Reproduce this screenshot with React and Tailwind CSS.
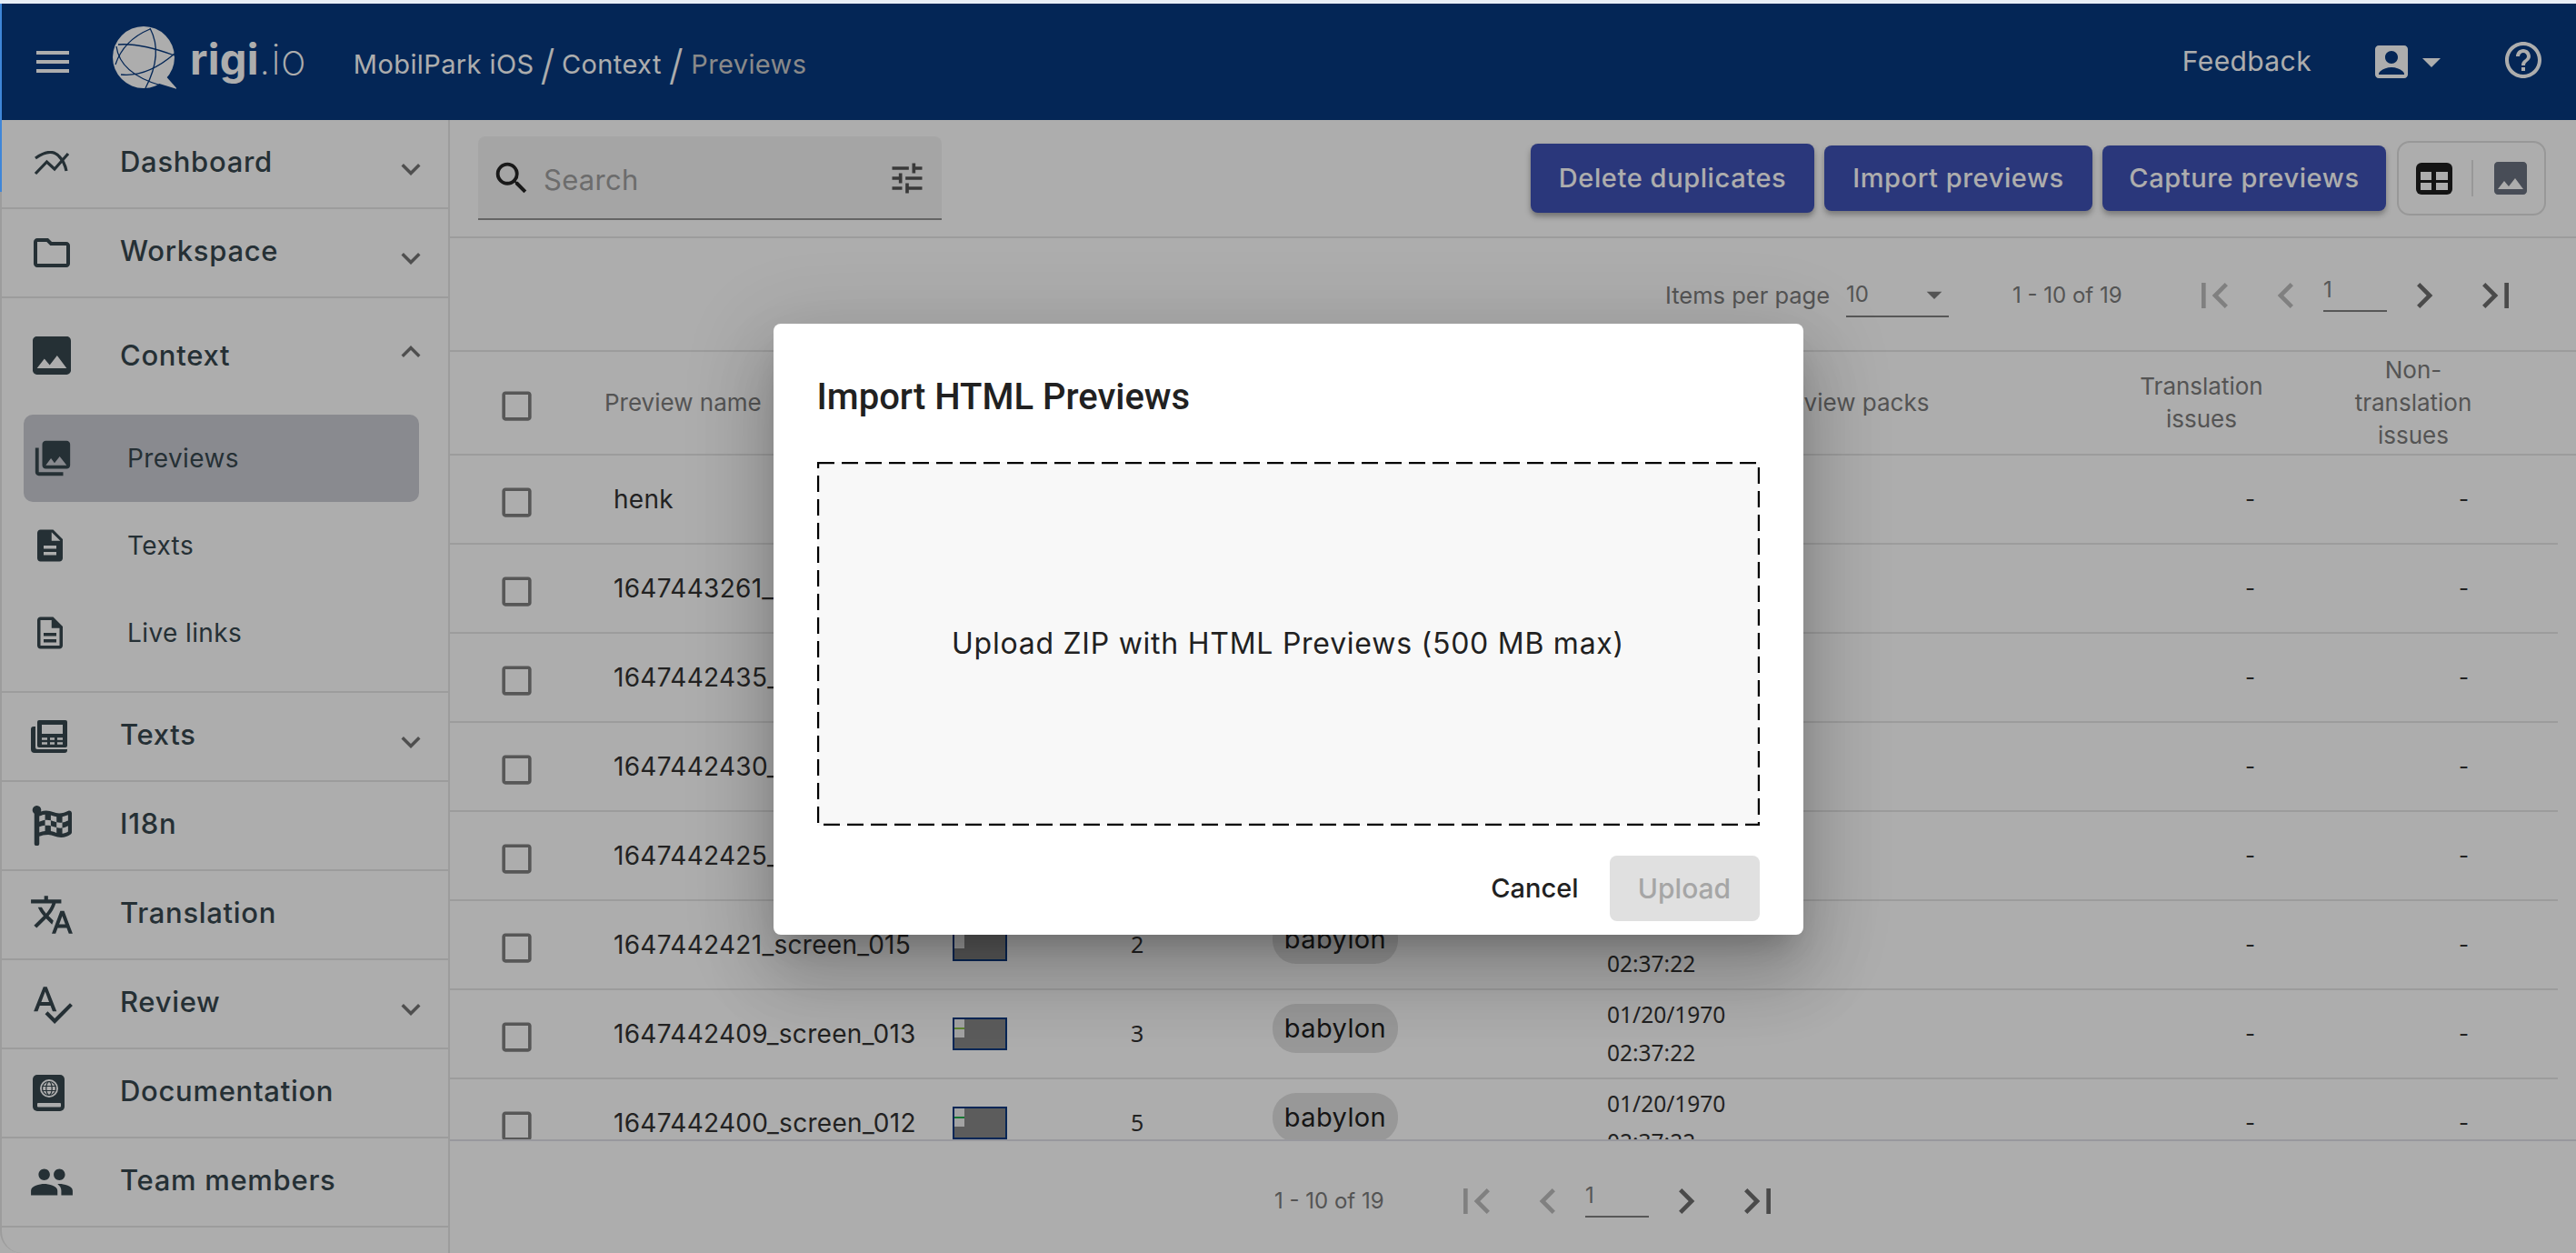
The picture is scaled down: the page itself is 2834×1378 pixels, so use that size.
import {
  MdMenu,
  MdOutlineFolder,
  MdImage,
  MdPhotoLibrary,
  MdDescription,
  MdOutlineDescription,
  MdTranslate,
  MdSpellcheck,
  MdPeople,
  MdExpandMore,
  MdExpandLess,
  MdAccountBox,
  MdArrowDropDown,
  MdHelpOutline,
  MdSearch,
  MdTune,
  MdFirstPage,
  MdLastPage,
  MdChevronLeft,
  MdChevronRight,
  MdCheckBoxOutlineBlank,
} from "react-icons/md";
import { FaFlagCheckered } from "react-icons/fa";

const rows = [
  { name: "henk", count: 1, line: "" },
  { name: "1647443261_screen_019", count: 2, line: "bg-[#8bc34a]" },
  { name: "1647442435_screen_018", count: 2, line: "bg-[#8bc34a]" },
  { name: "1647442430_screen_017", count: 4, line: "bg-[#8bc34a]" },
  { name: "1647442425_screen_016", count: 2, line: "bg-[#4caf50]" },
  { name: "1647442421_screen_015", count: 2, line: "" },
  { name: "1647442409_screen_013", count: 3, line: "bg-[#8bc34a]" },
  { name: "1647442400_screen_012", count: 5, line: "bg-[#22b14c]" },
];

function LogoMark() {
  return (
    <svg width="70" height="70" viewBox="0 0 70 70" fill="none">
      <circle cx="34" cy="34" r="34" fill="#fff" />
      <path d="M48 62 L71 69 L56 52 Z" fill="#fff" />
      <g stroke="#06397f" strokeWidth="1.3">
        <path d="M6 20 Q30 18 68 32" />
        <path d="M41 2 Q56 30 36 68" />
        <path d="M4 22 Q8 52 53 65" />
        <path d="M3 42 Q12 15 41 3" />
        <path d="M9 53 Q38 56 68 30" />
      </g>
    </svg>
  );
}

function DashboardIcon() {
  return (
    <svg width="40" height="28" viewBox="0 0 40 28" fill="none" stroke="#37474f" strokeWidth="3.2">
      <path d="M2 25 L14.5 12 L23 20 L38 3" />
      <path d="M2 8 Q19 -4 28 6 Q34 12 36 22" />
    </svg>
  );
}

function BookIcon() {
  return (
    <svg width="36" height="40" viewBox="0 0 36 40" className="-ml-[6px]">
      <rect x="0" y="0" width="35" height="40" rx="5" fill="#37474f" />
      <rect x="5" y="31" width="26" height="4.5" rx="1" fill="#fff" />
      <circle cx="18" cy="15" r="10" fill="#fff" />
      <g fill="none" stroke="#37474f" strokeWidth="1.2">
        <circle cx="18" cy="15" r="7.5" />
        <ellipse cx="18" cy="15" rx="3.2" ry="7.5" />
        <path d="M10.5 12.5 H25.5 M10.5 17.5 H25.5" />
      </g>
    </svg>
  );
}

function PaperIcon() {
  return (
    <svg width="40" height="36" viewBox="0 0 40 36" className="-ml-[6px]">
      <path d="M0 10 a3 3 0 0 1 3 -3 h2 v23 a2 2 0 0 0 2 2 h33 v1 a3 3 0 0 1 -3 3 H4 a4 4 0 0 1 -4 -4 Z" fill="#37474f" />
      <rect x="7" y="0" width="33" height="30" rx="2" fill="#37474f" />
      <rect x="12" y="5" width="23" height="10" fill="#fff" />
      <path d="M12 20.5 h6 M21 20.5 h5 M29 20.5 h6 M12 25.5 h6 M21 25.5 h5 M29 25.5 h6" stroke="#fff" strokeWidth="2.4" />
    </svg>
  );
}

function TableIcon() {
  return (
    <svg width="40" height="35" viewBox="0 0 40 35">
      <rect width="40" height="35" rx="6" fill="#1e1e1e" />
      <rect x="5" y="10" width="12" height="9" fill="#fff" />
      <rect x="22" y="10" width="13" height="9" fill="#fff" />
      <rect x="5" y="22" width="12" height="8" fill="#fff" />
      <rect x="22" y="22" width="13" height="8" fill="#fff" />
    </svg>
  );
}

function NavRow({ icon, label, chevron }) {
  return (
    <div className="flex h-[98px] shrink-0 items-center border-b-2 border-[#e6e6e6]">
      <div className="flex w-[110px] shrink-0 justify-center">{icon}</div>
      <span className="ml-[20px] flex-1 text-[31px] font-medium tracking-[0.7px] text-[#37474f] -mt-[3px]">{label}</span>
      {chevron && <MdExpandMore className="mr-[20px] mt-[12px] text-[#757575]" size={42} />}
    </div>
  );
}

function SubItem({ icon, label, active }) {
  return (
    <div className={`ml-[24px] mr-[32px] flex h-[96px] items-center rounded-[10px] ${active ? "bg-[#cbccd3]" : ""}`}>
      <div className="flex w-[68px] shrink-0 justify-center">{icon}</div>
      <span className="ml-[46px] text-[28px] tracking-[0.4px] text-[#37474f]">{label}</span>
    </div>
  );
}

function Sidebar() {
  return (
    <aside className="flex w-[495px] shrink-0 flex-col overflow-hidden rounded-bl-[24px] border-r-2 border-l-2 border-[#e6e6e6]">
      <NavRow icon={<DashboardIcon />} label="Dashboard" chevron />
      <NavRow icon={<MdOutlineFolder className="text-[#37474f]" size={48} />} label="Workspace" chevron />
      <div className="h-[434px] shrink-0 border-b-2 border-[#e6e6e6]">
        <div className="flex h-[128px] items-center pb-[2px]">
          <div className="flex w-[110px] shrink-0 justify-center">
            <MdImage className="text-[#37474f]" size={56} />
          </div>
          <span className="ml-[20px] flex-1 text-[31px] font-medium tracking-[0.7px] text-[#37474f]">Context</span>
          <MdExpandLess className="mr-[20px] -mt-[8px] text-[#757575]" size={42} />
        </div>
        <SubItem active icon={<MdPhotoLibrary className="-ml-[4px] text-[#37474f]" size={46} />} label="Previews" />
        <SubItem icon={<MdDescription className="-ml-[10px] text-[#37474f]" size={42} />} label="Texts" />
        <SubItem icon={<MdOutlineDescription className="-ml-[10px] text-[#37474f]" size={42} />} label="Live links" />
      </div>
      <NavRow icon={<PaperIcon />} label="Texts" chevron />
      <NavRow icon={<FaFlagCheckered className="text-[#37474f]" size={44} />} label="I18n" />
      <NavRow icon={<MdTranslate className="text-[#37474f]" size={50} />} label="Translation" />
      <NavRow icon={<MdSpellcheck className="text-[#37474f]" size={50} />} label="Review" chevron />
      <NavRow icon={<BookIcon />} label="Documentation" />
      <NavRow icon={<MdPeople className="text-[#37474f]" size={50} />} label="Team members" />
      <NavRow label="Project settings" />
    </aside>
  );
}

function Pager() {
  return (
    <div className="flex items-center text-[#6e6e6e]">
      <MdFirstPage className="text-[#bdbdbd]" size={56} />
      <MdChevronLeft className="ml-[23px] text-[#bdbdbd]" size={56} />
      <div className="ml-[13px] h-[36px] w-[70px] border-b-2 border-[#808080]">
        <span className="block text-[24px] leading-[24px] text-[#808080]">1</span>
      </div>
      <MdChevronRight className="ml-[13px]" size={56} />
      <MdLastPage className="ml-[23px]" size={56} />
    </div>
  );
}

function Row({ row }) {
  return (
    <div className="grid h-[98px] w-[2319px] shrink-0 grid-cols-[170px_383px_182px_170px_368px_176px_378px_200px_33px_200px] items-center border-b-2 border-[#e6e6e6] text-[#333]">
      <div className="flex justify-center pr-[24px] pt-[6px]">
        <MdCheckBoxOutlineBlank className="text-[#808080]" size={43} />
      </div>
      <div className="pl-[10px] text-[28px] tracking-[0.3px]">{row.name}</div>
      <div className="h-[36px] w-[60px] border-2 border-[#06397f] bg-[#888888]">
        <div className="flex h-[20px] w-[11px] flex-col justify-center bg-[#f0f0f0]">
          {row.line && <div className={`h-[2px] ${row.line}`} />}
        </div>
      </div>
      <div className="pl-[14px] font-['Noto_Sans'] text-[25px]">{row.count}</div>
      <div className="-mt-[12px]">
        <span className="inline-flex h-[54px] w-[138px] items-center justify-center rounded-[26px] bg-[#e0e0e0] text-[29px] tracking-[0.4px] text-[#212121]">
          babylon
        </span>
      </div>
      <div className="font-['Noto_Sans'] text-[24.5px] leading-[42px]">
        01/20/1970
        <br />
        02:37:22
      </div>
      <div />
      <div className="pr-[41px] text-right text-[24px]">-</div>
      <div />
      <div className="pr-[39px] text-right text-[24px]">-</div>
    </div>
  );
}

function MainPanel() {
  return (
    <main className="flex min-w-0 flex-1 flex-col">
      <div className="flex h-[130px] shrink-0 items-start border-b-2 border-[#e6e6e6] pl-[31px]">
        <div className="mt-[18px] flex h-[92px] w-[510px] items-center rounded-t-[8px] border-b-2 border-[#949494] bg-[#f4f4f4] pl-[14px] pr-[16px] pt-[2px]">
          <MdSearch className="text-[#262626]" size={46} />
          <span className="ml-[12px] flex-1 pt-[4px] text-[31px] tracking-[0.3px] text-[#a0a0a0]">Search</span>
          <MdTune className="text-[#555]" size={44} />
        </div>
        <button className="ml-[648px] mt-[26px] h-[76px] w-[312px] rounded-[8px] bg-[#3f51b5] text-[29px] font-medium tracking-[0.6px] text-white shadow-[0_4px_6px_rgba(0,0,0,0.35)]">
          Delete duplicates
        </button>
        <button className="ml-[11px] mt-[28px] h-[72px] w-[295px] rounded-[8px] bg-[#3f51b5] text-[29px] font-medium tracking-[0.6px] text-white shadow-[0_4px_6px_rgba(0,0,0,0.3)]">
          Import previews
        </button>
        <button className="ml-[11px] mt-[28px] h-[72px] w-[312px] rounded-[8px] bg-[#3f51b5] text-[29px] font-medium tracking-[0.6px] text-white shadow-[0_4px_6px_rgba(0,0,0,0.3)]">
          Capture previews
        </button>
        <div className="ml-[12px] mt-[23px] flex h-[82px] w-[164px] items-center rounded-[14px] border-2 border-[#e0e0e0] pl-[19px]">
          <TableIcon />
          <div className="ml-[21px] h-[40px] w-[2px] bg-[#e0e0e0]" />
          <div className="ml-[17px]">
            <MdImage className="text-[#6b7280]" size={48} />
          </div>
        </div>
      </div>

      <div className="flex h-[125px] shrink-0 items-center border-b-2 border-[#e6e6e6] pt-[3px] pl-[1337px] text-[24px] text-[#7d7d7d]">
        <span className="w-[199px] text-[25.5px]">Items per page</span>
        <div className="flex h-[48px] w-[113px] items-center justify-between border-b-2 border-[#808080]">
          <span>10</span>
          <MdArrowDropDown className="mr-[-4px]" size={40} />
        </div>
        <span className="ml-[70px] w-[194px]">1 - 10 of 19</span>
        <Pager />
      </div>

      <div className="flex h-[868px] shrink-0 flex-col overflow-hidden border-b-2 border-[#e0e0e8]">
        <div className="grid h-[114px] shrink-0 grid-cols-[170px_383px_182px_170px_368px_176px_378px_200px_33px_200px] items-center border-b-2 border-[#e6e6e6] text-[26px] leading-[36px] text-[#7d7d7d]">
          <div className="flex justify-center pr-[24px] pt-[6px]">
            <MdCheckBoxOutlineBlank className="text-[#808080]" size={43} />
          </div>
          <div>Preview name</div>
          <div />
          <div />
          <div />
          <div />
          <div>Preview packs</div>
          <div className="text-center">
            Translation
            <br />
            issues
          </div>
          <div />
          <div className="text-center">
            Non-
            <br />
            translation
            <br />
            issues
          </div>
        </div>
        {rows.map((row) => (
          <Row key={row.name} row={row} />
        ))}
      </div>

      <div className="flex flex-1 items-center pt-[8px] pl-[907px] text-[24px] text-[#7d7d7d]">
        <span className="w-[194px]">1 - 10 of 19</span>
        <Pager />
      </div>
    </main>
  );
}

function ImportDialog() {
  return (
    <div className="flex h-[672px] w-[1133px] flex-col rounded-[8px] bg-white px-[48px] shadow-[0_22px_30px_-14px_rgba(0,0,0,0.2),0_48px_76px_6px_rgba(0,0,0,0.14),0_18px_92px_16px_rgba(0,0,0,0.12)]">
      <h2 className="mt-[57px] h-[48px] font-['Roboto'] text-[40px] leading-[48px] font-medium text-[#212121]">
        Import HTML Previews
      </h2>
      <div className="relative mt-[47px] flex h-[400px] items-center justify-center bg-[#f8f8f8] text-[32px] tracking-[0.75px] text-[#212121]">
        Upload ZIP with HTML Previews (500 MB max)
        <svg className="absolute inset-0" width="1037" height="400" fill="none">
          <rect x="1" y="1" width="1035" height="398" stroke="#000" strokeWidth="2.4" strokeDasharray="18 8" />
        </svg>
      </div>
      <div className="mt-[33px] flex items-center justify-end">
        <span className="mr-[34px] text-[29px] font-medium text-[#212121]">Cancel</span>
        <button className="h-[72px] w-[165px] rounded-[8px] bg-[#e0e0e0] text-[30px] font-medium text-[#a6a6a6]">Upload</button>
      </div>
    </div>
  );
}

export default function App() {
  return (
    <div className="relative flex h-screen flex-col overflow-hidden bg-white font-['Inter','Noto_Sans',sans-serif]">
      <div className="h-[4px] shrink-0 bg-[#e8eef6]" />
      <header className="flex h-[128px] shrink-0 items-center bg-[#06397f] pl-[34px] text-white">
        <MdMenu size={48} />
        <div className="ml-[42px] -mt-[8px]">
          <LogoMark />
        </div>
        <div className="ml-[15px] -mt-[6px] text-[47px] tracking-[0.3px]">
          <span className="font-bold">rigi</span>
          <span className="font-extralight">.io</span>
        </div>
        <div className="ml-[52px] flex items-center pt-[6px] text-[29px] tracking-[0.4px]">
          <span>MobilPark iOS</span>
          <span className="mx-[7px] text-[46px] font-light">/</span>
          <span>Context</span>
          <span className="mx-[8px] text-[46px] font-light">/</span>
          <span className="text-[#cbcbcb]">Previews</span>
        </div>
        <div className="flex-1" />
        <span className="-mt-[1px] text-[30px] tracking-[0.4px]">Feedback</span>
        <MdAccountBox className="ml-[64px]" size={48} />
        <MdArrowDropDown className="ml-[-4px]" size={48} />
        <MdHelpOutline className="ml-[53px] mr-[34px] -mt-[5px]" size={48} />
      </header>
      <div className="flex min-h-0 flex-1">
        <Sidebar />
        <MainPanel />
      </div>
      <div className="absolute inset-x-0 top-[4px] bottom-0 flex items-center justify-center bg-black/32 pt-[2px]">
        <ImportDialog />
      </div>
      <div className="absolute top-[4px] left-0 h-[207px] w-[2px] bg-[#3f86d8]" />
    </div>
  );
}
